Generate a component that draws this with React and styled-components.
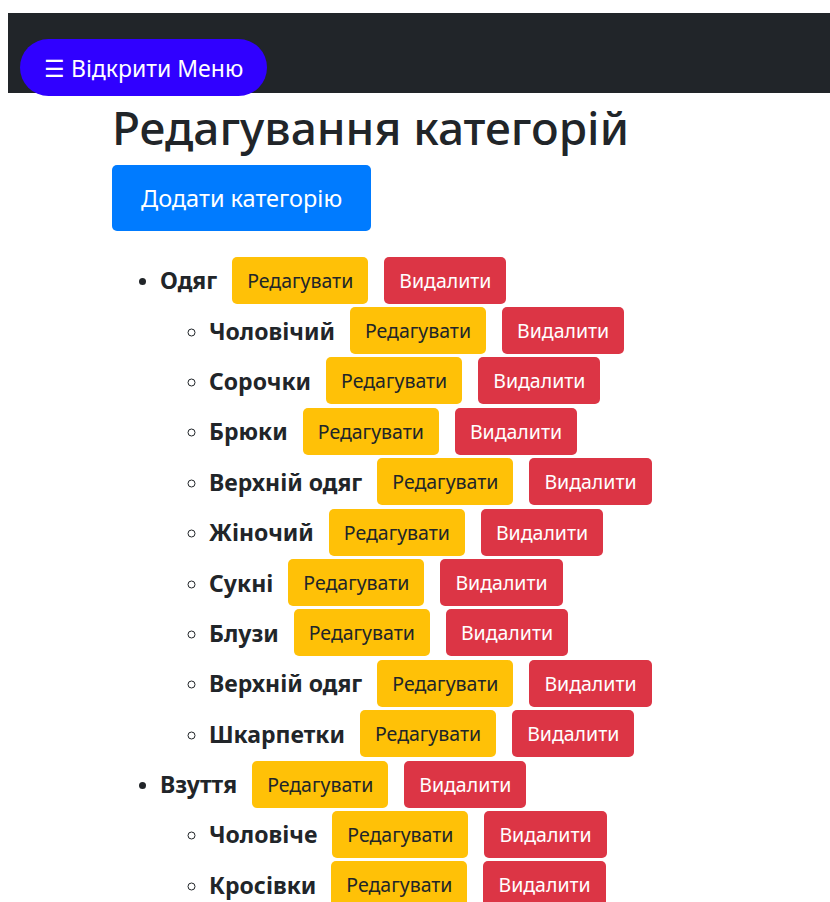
import React from "react";
import styled, { createGlobalStyle } from "styled-components";

const GlobalStyle = createGlobalStyle`
  body {
    margin: 0;
    background: #fff;
    font-family: "Noto Sans", "Open Sans", "Liberation Sans", sans-serif;
    color: #212529;
  }
`;

const TopBar = styled.div`
  margin: 13px 0 0 8px;
  height: 80px;
  background: #212529;
  padding: 26px 0 0 12px;
  box-sizing: border-box;
`;

const MenuButton = styled.button`
  display: inline-flex;
  align-items: center;
  height: 57px;
  padding: 0 24px;
  border: none;
  border-radius: 29px;
  background: #3000ff;
  color: #fff;
  font-family: inherit;
  font-size: 23px;
  cursor: pointer;
  position: relative;
  z-index: 1;
`;

const Container = styled.div`
  padding: 0 0 0 112px;
`;

const Title = styled.h1`
  margin: 0 0 8px;
  padding-top: 4px;
  font-size: 46px;
  font-weight: 500;
  line-height: 60px;
`;

const AddButton = styled.button`
  height: 66px;
  padding: 0 29px;
  border: none;
  border-radius: 5px;
  background: #007bff;
  color: #fff;
  font-family: inherit;
  font-size: 23.5px;
  cursor: pointer;
`;

const List = styled.ul`
  list-style: ${(p) => (p.$nested ? "circle" : "disc")};
  margin: ${(p) => (p.$nested ? "0" : "24px 0 0")};
  padding-left: ${(p) => (p.$nested ? "49px" : "48px")};
`;

const Item = styled.li`
  font-size: 20px;
  line-height: 30px;
`;

const Row = styled.div`
  display: flex;
  align-items: center;
  height: 50.4px;
`;

const Label = styled.b`
  font-size: 23px;
  font-weight: 700;
  margin-right: 15px;
`;

const ActionButton = styled.button`
  height: 47px;
  padding: 0 15px;
  margin-right: 16px;
  border: none;
  border-radius: 5px;
  background: ${(p) => (p.$danger ? "#dc3545" : "#ffc107")};
  color: ${(p) => (p.$danger ? "#fff" : "#212529")};
  font-family: inherit;
  font-size: 19.5px;
  cursor: pointer;
`;

const categories = [
  {
    name: "Одяг",
    children: [
      "Чоловічий",
      "Сорочки",
      "Брюки",
      "Верхній одяг",
      "Жіночий",
      "Сукні",
      "Блузи",
      "Верхній одяг",
      "Шкарпетки",
    ],
  },
  {
    name: "Взуття",
    children: ["Чоловіче", "Кросівки"],
  },
];

function CategoryRow({ name }) {
  return (
    <Row>
      <Label>{name}</Label>
      <ActionButton>Редагувати</ActionButton>
      <ActionButton $danger>Видалити</ActionButton>
    </Row>
  );
}

export default function App() {
  return (
    <>
      <GlobalStyle />
      <TopBar>
        <MenuButton>☰ Відкрити Меню</MenuButton>
      </TopBar>
      <Container>
        <Title>Редагування категорій</Title>
        <AddButton>Додати категорію</AddButton>
        <List>
          {categories.map((cat) => (
            <Item key={cat.name}>
              <CategoryRow name={cat.name} />
              <List $nested>
                {cat.children.map((child, i) => (
                  <Item key={i}>
                    <CategoryRow name={child} />
                  </Item>
                ))}
              </List>
            </Item>
          ))}
        </List>
      </Container>
    </>
  );
}
